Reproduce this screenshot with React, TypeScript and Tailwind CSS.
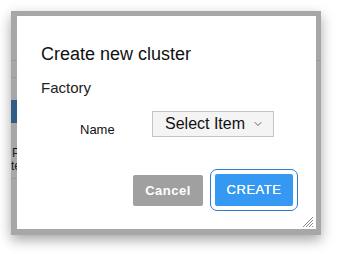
import React from "react"
import { ChevronDown } from "lucide-react"

const font = { fontFamily: '"Liberation Sans", Arial, sans-serif' }

const Backdrop = () => {
  // the dimmed page that sits behind the dialog
  return (
    <div className="h-full w-full bg-[#a7a7a7] text-[#1c1c1c]">
      <div className="h-[50px] border-b border-[#9a9a9a]"></div>
      <div className="h-[17px] w-[120px] border-b border-[#9a9a9a]"></div>
      <div className="mt-[22px] h-[23px] w-[60px] bg-[#2f5d86]"></div>
      <div className="mt-[24px] pl-[1px] text-[12px] leading-[13px]">Pr</div>
      <div className="text-[12px] leading-[13px]">te</div>
      <div className="mt-[5px] w-[120px] border-b border-[#9a9a9a]"></div>
    </div>
  )
}

const ResizeGrip = () => (
  <svg width="12" height="12" viewBox="0 0 12 12" className="absolute bottom-[1px] right-[2px]">
    <path d="M11 1 L1 11 M11 4 L4 11 M11 7 L7 11 M11 10 L10 11" stroke="#8a8a8a" strokeWidth="1" />
  </svg>
)

export default function App() {
  return (
    <div className="h-[254px] w-[340px] bg-white pl-[11px] pt-[11px]" style={font}>
      <div className="relative h-[224px] w-[310px] shadow-[0_5px_12px_rgba(0,0,0,0.35)]">
        <Backdrop />
        <div className="absolute bottom-[6px] left-[6px] right-[5px] top-[5px] bg-white pl-[24px] pt-[27px]">
          <h2 className="text-[18px] leading-[22px] text-[#111]">Create new cluster</h2>
          <p className="mt-[13px] text-[15px] leading-[20px] text-[#222]">Factory</p>

          <div className="mt-[13px] flex items-start">
            <span className="ml-[39px] mt-[11px] w-[37px] text-[13px] leading-[16px] text-[#111]">Name</span>
            <button className="ml-[35px] flex h-[26px] w-[122px] items-center justify-between border border-[#c4c4c4] bg-[#f4f4f4] pl-[12px] pr-[9px] text-[16px] text-[#111]">
              Select Item
              <ChevronDown size={12} strokeWidth={2} className="text-[#666]" />
            </button>
          </div>

          <div className="mt-[37px] flex pl-[92px]">
            <button className="h-[31px] w-[70px] rounded-[2px] bg-[#a0a0a0] text-[13px] font-bold tracking-[0.5px] text-white">
              Cancel
            </button>
            <button className="ml-[12px] mt-[-1px] h-[32px] w-[78px] rounded-[2px] bg-[#3598f2] text-[13px] tracking-[0.5px] text-white outline outline-1 outline-offset-4 outline-[#2f7ad4] [text-shadow:0_0_0.4px_white]">
              CREATE
            </button>
          </div>
          <ResizeGrip />
        </div>
      </div>
    </div>
  )
}
